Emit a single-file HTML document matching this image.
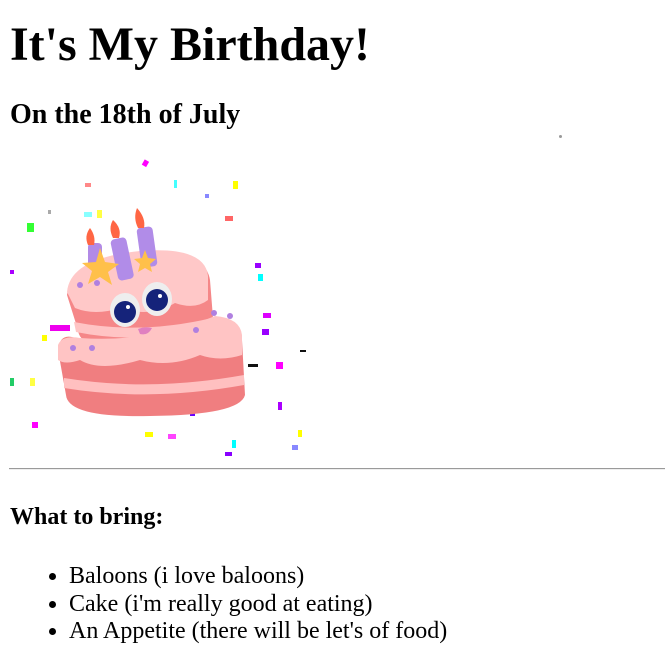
<!DOCTYPE html>
<html><head><meta charset="utf-8"><style>
html,body{margin:0;padding:0;background:#fff;}
body{font-family:"Liberation Serif",serif;color:#000;position:relative;width:665px;height:631px;overflow:hidden;}
.t{position:absolute;left:10px;margin:0;white-space:nowrap;}
h1.t{font-size:48px;font-weight:bold;top:17px;}
h2.t{font-size:28px;font-weight:bold;top:99px;}
h4.t{font-size:24px;font-weight:bold;top:504px;}
hr{position:absolute;left:9px;top:468px;width:656px;margin:0;border:0;border-top:1px solid #9a9a9a;border-bottom:1px solid #eee;height:0;}
ul{position:absolute;left:0;top:563px;margin:0;padding:0 0 0 69px;font-size:24px;line-height:27.6px;}
svg{position:absolute;left:0;top:150px;}
.dot{position:absolute;left:559px;top:135px;width:3px;height:3px;border-radius:50%;background:#999;}
</style></head><body>
<h1 class="t">It's My Birthday!</h1>
<h2 class="t">On the 18th of July</h2>
<div class="dot"></div>
<svg width="320" height="310" viewBox="0 150 320 310">
<g>
<rect x="143" y="160" width="5" height="6" fill="#f0f" transform="rotate(30 145 163)"/>
<rect x="233" y="181" width="5" height="8" fill="#ff0"/>
<rect x="85" y="183" width="6" height="4" fill="#f88"/>
<rect x="174" y="180" width="3" height="8" fill="#4ff"/>
<rect x="27" y="223" width="7" height="9" fill="#3f3"/>
<rect x="225" y="216" width="8" height="5" fill="#f66"/>
<rect x="84" y="212" width="8" height="5" fill="#8ff"/>
<rect x="97" y="210" width="5" height="8" fill="#ff4"/>
<rect x="10" y="270" width="4" height="4" fill="#a0f"/>
<rect x="255" y="263" width="6" height="5" fill="#90f"/>
<rect x="258" y="274" width="5" height="7" fill="#0ff"/>
<rect x="263" y="313" width="8" height="5" fill="#d0f"/>
<rect x="262" y="329" width="7" height="6" fill="#90f"/>
<rect x="50" y="325" width="20" height="6" fill="#e0e"/>
<rect x="42" y="335" width="5" height="6" fill="#ff0"/>
<rect x="276" y="362" width="7" height="7" fill="#f0f"/>
<rect x="248" y="364" width="10" height="3" fill="#111"/>
<rect x="300" y="350" width="6" height="2" fill="#111"/>
<rect x="10" y="378" width="4" height="8" fill="#2c6"/>
<rect x="30" y="378" width="5" height="8" fill="#ff4"/>
<rect x="32" y="422" width="6" height="6" fill="#f0f"/>
<rect x="278" y="402" width="4" height="8" fill="#a0f"/>
<rect x="145" y="432" width="8" height="5" fill="#ff0"/>
<rect x="168" y="434" width="8" height="5" fill="#f4f"/>
<rect x="190" y="410" width="5" height="6" fill="#60f"/>
<rect x="232" y="440" width="4" height="8" fill="#0ff"/>
<rect x="298" y="430" width="4" height="7" fill="#ff0"/>
<rect x="292" y="445" width="6" height="5" fill="#88f"/>
<rect x="225" y="452" width="7" height="4" fill="#80f"/>
<rect x="48" y="210" width="3" height="4" fill="#aaa"/>
<rect x="205" y="194" width="4" height="4" fill="#88f"/>
</g>
<path d="M67 295 Q70 260 140 253 Q205 248 210 280 L213 318 Q200 345 140 348 Q80 352 78 330 Z" fill="#f58788"/>
<path d="M67 292 Q70 258 140 251 Q205 246 208 276 L208 300 Q195 310 175 303 Q150 318 120 308 Q95 316 75 308 Z" fill="#ffc8c8"/>
<path d="M74 322 Q140 335 212 318 L212 328 Q140 345 76 332 Z" fill="#ffc4c4"/>
<path d="M58 350 Q60 330 80 340 Q150 345 215 318 Q240 320 242 340 L245 395 Q240 415 150 416 Q68 418 66 395 Z" fill="#f07e80"/>
<path d="M58 345 Q62 335 80 338 Q150 343 215 316 Q240 318 242 335 L242 355 Q220 362 200 355 Q170 368 140 360 Q100 372 80 360 Q65 365 58 360 Z" fill="#ffc4c4"/>
<path d="M64 378 Q150 392 244 375 L244 385 Q150 402 64 388 Z" fill="#ffc0c0"/>
<rect x="88" y="243" width="14" height="26" rx="4" fill="#b28ae6"/>
<rect x="114" y="238" width="16" height="42" rx="4" fill="#b18ce8" transform="rotate(-12 122 258)"/>
<rect x="139" y="227" width="16" height="40" rx="4" fill="#b18ce8" transform="rotate(-8 147 247)"/>
<path d="M88 245 Q84 236 90 228 Q96 236 94 245 Z" fill="#f64"/>
<path d="M113 238 Q108 228 113 220 Q122 228 119 238 Z" fill="#f64"/>
<path d="M138 228 Q133 218 137 208 Q146 218 144 228 Z" fill="#f64"/>
<polygon points="100,248 105,262 119,264 108,272 112,285 100,277 88,284 92,271 82,263 96,262" fill="#ffc04a"/>
<polygon points="145,250 148,258 156,259 150,264 152,272 145,268 138,272 140,264 134,259 142,258" fill="#ffc04a"/>
<ellipse cx="125" cy="310" rx="15" ry="17" fill="#eee"/>
<ellipse cx="157" cy="299" rx="15" ry="17" fill="#eee"/>
<circle cx="125" cy="312" r="11" fill="#15237a"/>
<circle cx="157" cy="300" r="11" fill="#15237a"/>
<circle cx="128" cy="307" r="2" fill="#fff"/>
<circle cx="160" cy="296" r="2" fill="#fff"/>
<path d="M138 329 Q145 326 152 328 Q148 336 140 334 Z" fill="#e080c0"/>
<g fill="#b080e0"><circle cx="80" cy="285" r="3"/><circle cx="97" cy="283" r="3"/><circle cx="73" cy="348" r="3"/><circle cx="92" cy="348" r="3"/><circle cx="214" cy="313" r="3"/><circle cx="230" cy="316" r="3"/><circle cx="196" cy="330" r="3"/></g>
</svg>
<hr>
<h4 class="t">What to bring:</h4>
<ul>
<li>Baloons (i love baloons)</li>
<li>Cake (i'm really good at eating)</li>
<li>An Appetite (there will be let's of food)</li>
</ul>
</body></html>
